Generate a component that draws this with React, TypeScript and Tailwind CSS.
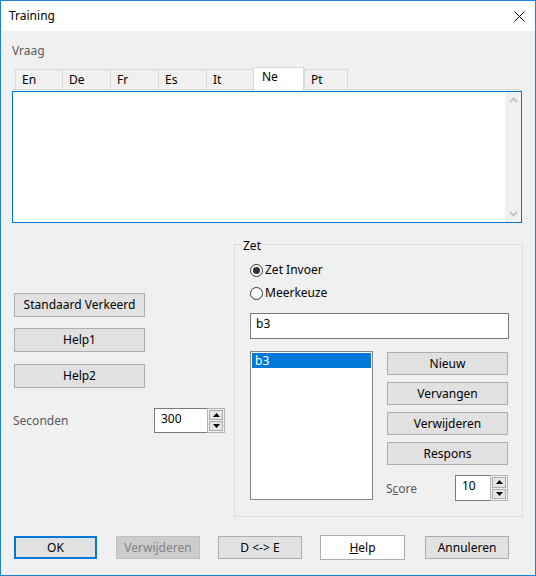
import React from "react";

const F = { fontFamily: '"Noto Sans", "Open Sans", sans-serif' };

function Btn({ label, w, h = 24, cls = "" }: { label: React.ReactNode; w: number; h?: number; cls?: string }) {
  return (
    <div
      className={"flex items-center justify-center bg-[#e1e1e1] border border-[#adadad] text-black leading-[16px] " + cls}
      style={{ width: w, height: h }}
    >
      {label}
    </div>
  );
}

function Tri({ up }: { up: boolean }) {
  return (
    <svg width="7" height="4" viewBox="0 0 7 4">
      {up ? <polygon points="0,4 7,4 3.5,0" fill="#000" /> : <polygon points="0,0 7,0 3.5,4" fill="#000" />}
    </svg>
  );
}

function Spin({ value, w, h }: { value: string; w: number; h: number }) {
  return (
    <div className="flex" style={{ width: w, height: h }}>
      <div className="flex-1 bg-white border-y border-l border-[#7a7a7a] pl-[6px] pt-[2px] leading-[16px] text-black">
        {value}
      </div>
      <div className="w-[18px] border border-[#b4b4b4] bg-[#f0f0f0] p-[1px] flex flex-col gap-[1px]">
        <div className="flex-1 bg-[#e5e5e5] border border-[#acacac] flex items-center justify-center">
          <Tri up />
        </div>
        <div className="flex-1 bg-[#e5e5e5] border border-[#acacac] flex items-center justify-center">
          <Tri up={false} />
        </div>
      </div>
    </div>
  );
}

function Radio({ checked, label }: { checked: boolean; label: string }) {
  return (
    <div className="flex items-center h-[16px]">
      <div className="w-[13px] h-[13px] rounded-full border border-[#333] bg-white flex items-center justify-center">
        {checked && <div className="w-[7px] h-[7px] rounded-full bg-[#333]" />}
      </div>
      <span className="ml-[2px] text-black leading-[16px]">{label}</span>
    </div>
  );
}

export default function App() {
  const tabs: { t: string; w: number }[] = [
    { t: "En", w: 47 },
    { t: "De", w: 48 },
    { t: "Fr", w: 48 },
    { t: "Es", w: 48 },
    { t: "It", w: 47 },
    { t: "Ne", w: 51 },
    { t: "Pt", w: 44 },
  ];
  return (
    <div
      className="w-[536px] h-[576px] border border-[#1883d7] bg-[#f0f0f0] flex flex-col text-[12px] overflow-hidden"
      style={F}
    >
      {/* Title bar */}
      <div className="h-[30px] bg-white flex items-center justify-between pl-[8px] pr-[10px] shrink-0">
        <span className="text-black text-[12px] leading-[16px]">Training</span>
        <svg width="11" height="11" viewBox="0 0 11 11">
          <path d="M0.5 0.5 L10.5 10.5 M10.5 0.5 L0.5 10.5" stroke="#000" strokeWidth="1" />
        </svg>
      </div>

      {/* Vraag */}
      <div className="mt-[12px] ml-[11px] leading-[16px] text-[#5a5a5a]">Vraag</div>

      {/* Tabs */}
      <div className="mt-[8px] ml-[14px] h-[22px] flex items-end">
        {tabs.map((tb, i) => {
          const sel = tb.t === "Ne";
          return sel ? (
            <div
              key={tb.t}
              className="relative z-10 h-[24px] mb-[-2px] bg-white border-t border-x border-[#d9d9d9] pl-[8px] pt-[1px] leading-[16px] text-black"
              style={{ width: tb.w }}
            >
              {tb.t}
            </div>
          ) : (
            <div
              key={tb.t}
              className={
                "h-[20px] border-t border-l border-[#d9d9d9] pl-[6px] pt-[2px] leading-[16px] text-black" +
                (i === tabs.length - 1 ? " border-r" : "")
              }
              style={{ width: tb.w }}
            >
              {tb.t}
            </div>
          );
        })}
      </div>
      <div className="ml-[12px] w-[508px] h-[2px] border-t border-r border-[#d9d9d9]" />

      {/* Text area */}
      <div className="ml-[11px] w-[510px] h-[132px] border border-[#0078d7] bg-white flex justify-end">
        <div className="w-[16px] h-full bg-[#f0f0f0] flex flex-col items-center justify-between py-[5px]">
          <svg width="9" height="6" viewBox="0 0 9 6">
            <path d="M1 5 L4.5 1.5 L8 5" stroke="#c2c2c2" strokeWidth="1.8" fill="none" />
          </svg>
          <svg width="9" height="6" viewBox="0 0 9 6">
            <path d="M1 1 L4.5 4.5 L8 1" stroke="#c2c2c2" strokeWidth="1.8" fill="none" />
          </svg>
        </div>
      </div>

      {/* Lower section */}
      <div className="flex items-start">
        <div className="ml-[12px] w-[212px] flex flex-col">
          <Btn label="Standaard Verkeerd" w={131} cls="ml-[1px] mt-[70px]" />
          <Btn label="Help1" w={131} cls="ml-[1px] mt-[11px]" />
          <Btn label="Help2" w={131} cls="ml-[1px] mt-[12px]" />
          <div className="mt-[20px] flex items-center justify-between">
            <span className="text-[#5a5a5a] leading-[16px]">Seconden</span>
            <Spin value="300" w={71} h={25} />
          </div>
        </div>

        <div className="relative ml-[9px] mt-[21px] w-[289px] h-[273px] border border-[#dcdcdc] flex flex-col pl-[15px]">
          <span className="absolute left-[7px] top-[-7px] px-[1px] bg-[#f0f0f0] leading-[16px] text-black">Zet</span>
          <div className="mt-[17px]">
            <Radio checked label="Zet Invoer" />
          </div>
          <div className="mt-[7px]">
            <Radio checked={false} label="Meerkeuze" />
          </div>
          <div className="mt-[12px] w-[259px] h-[26px] bg-white border border-[#7a7a7a] pl-[5px] pt-[2px] leading-[16px] text-black">
            b3
          </div>
          <div className="mt-[12px] flex items-start">
            <div className="w-[123px] h-[149px] bg-white border border-[#828790] p-[1px]">
              <div className="h-[15px] bg-[#0078d7] text-white pl-[3px] leading-[15px]">b3</div>
            </div>
            <div className="ml-[14px] flex flex-col">
              <Btn label="Nieuw" w={121} h={23} cls="mt-[1px]" />
              <Btn label="Vervangen" w={121} h={23} cls="mt-[7px]" />
              <Btn label="Verwijderen" w={121} h={23} cls="mt-[7px]" />
              <Btn label="Respons" w={121} h={23} cls="mt-[7px]" />
              <div className="mt-[10px] flex items-center justify-between w-[122px] ml-[-1px]">
                <span className="text-[#5a5a5a] leading-[16px] mt-[2px]">
                  S<span className="underline">c</span>ore
                </span>
                <Spin value="10" w={53} h={26} />
              </div>
            </div>
          </div>
        </div>
      </div>

      {/* Bottom buttons */}
      <div className="mt-[18px] ml-[13px] flex items-center">
        <div className="w-[83px] h-[23px] border-2 border-[#0078d7] bg-[#e1e1e1] flex items-center justify-center text-black leading-[16px]">
          OK
        </div>
        <div className="ml-[19px] w-[84px] h-[23px] border border-[#bfbfbf] bg-[#cccccc] flex items-center justify-center text-[#838383] leading-[16px]">
          Verwijderen
        </div>
        <Btn label="D <-> E" w={84} h={23} cls="ml-[18px]" />
        <div className="ml-[18px] w-[85px] h-[25px] border border-[#adadad] bg-white flex items-center justify-center text-black leading-[16px]">
          <span>
            <span className="underline">H</span>elp
          </span>
        </div>
        <Btn label="Annuleren" w={84} h={23} cls="ml-[20px]" />
      </div>
    </div>
  );
}
